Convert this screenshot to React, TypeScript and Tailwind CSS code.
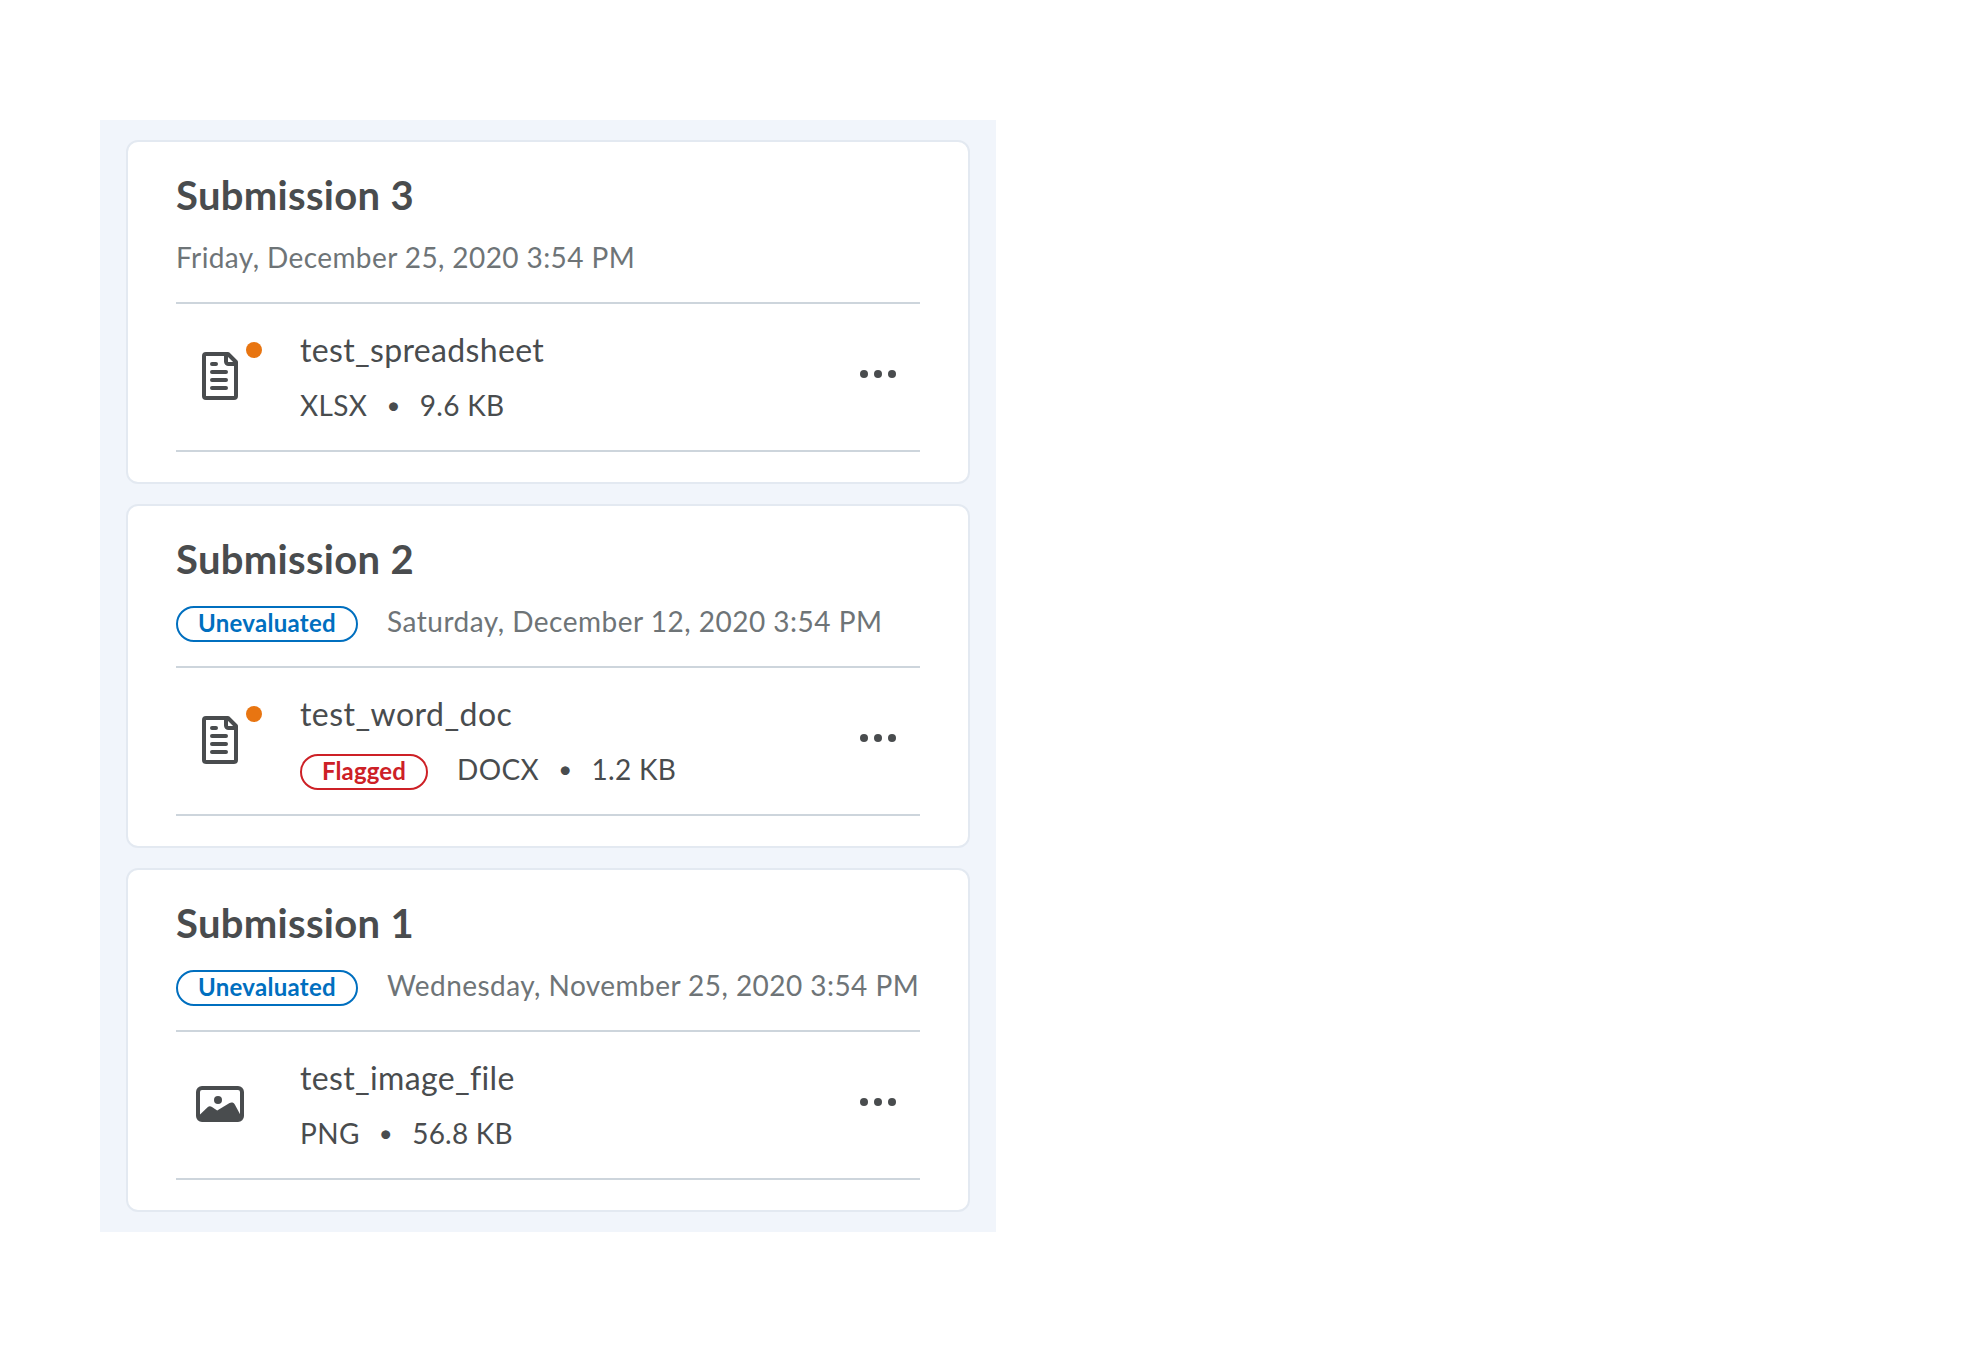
import type { ReactNode } from "react";

type Submission = {
  title: string;
  unevaluated: boolean;
  date: string;
  dateTracking: string;
  file: string;
  fileTracking: string;
  kind: "document" | "image";
  unread: boolean;
  flagged: boolean;
  ext: string;
  size: string;
  sizeTracking: string;
};

const submissions: Submission[] = [
  { title: "Submission 3", unevaluated: false, date: "Friday, December 25, 2020 3:54 PM", dateTracking: "tracking-[0.41px]", file: "test_spreadsheet", fileTracking: "tracking-[0.34px]", kind: "document", unread: true, flagged: false, ext: "XLSX", size: "9.6 KB", sizeTracking: "tracking-[0.3px]" },
  { title: "Submission 2", unevaluated: true, date: "Saturday, December 12, 2020 3:54 PM", dateTracking: "tracking-[0.5px]", file: "test_word_doc", fileTracking: "tracking-[0.46px]", kind: "document", unread: true, flagged: true, ext: "DOCX", size: "1.2 KB", sizeTracking: "tracking-[0.3px]" },
  { title: "Submission 1", unevaluated: true, date: "Wednesday, November 25, 2020 3:54 PM", dateTracking: "tracking-[0.45px]", file: "test_image_file", fileTracking: "tracking-[0.34px]", kind: "image", unread: false, flagged: false, ext: "PNG", size: "56.8 KB", sizeTracking: "tracking-[0.2px]" },
];

function DocumentIcon() {
  return (
    <svg className="size-12" viewBox="0 0 48 48" fill="none" stroke="currentColor" strokeWidth="4">
      <path d="M10 2H32L40 10V44a2 2 0 0 1-2 2H10a2 2 0 0 1-2-2V4a2 2 0 0 1 2-2Z" strokeLinejoin="round" />
      <path d="M30 2v7.500a2.500 2.500 0 0 0 2.500 2.500H40" />
      <path d="M16 12h4M16 20h14M16 28h14M16 36h14" strokeLinecap="round" />
    </svg>
  );
}

function ImageIcon() {
  return (
    <svg className="size-12" viewBox="0 0 48 48" fill="currentColor">
      <rect x="2" y="8" width="44" height="32" rx="4" fill="none" stroke="currentColor" strokeWidth="4" />
      <circle cx="22" cy="20" r="4" />
      <path d="M3 35.500 11.600 27.200a3.400 3.400 0 0 1 4.400-.2l5.200 3.600 12.400-7.600a3.600 3.600 0 0 1 5.200 1.400L45 36v4H3Z" />
    </svg>
  );
}

function Pill({ className, children }: { className: string; children: ReactNode }) {
  return (
    <span className={`mt-0.5 mr-[29px] h-9 shrink-0 rounded-full border-2 px-5 text-2xl/[29px] font-bold ${className}`}>
      {children}
    </span>
  );
}

function Card({ s }: { s: Submission }) {
  return (
    <article className="h-[344px] rounded-xl border-2 border-[#e3e9f1] bg-white px-12 pt-[29px]">
      <h3 className="text-[40px]/[48px] font-bold tracking-[0.3px]">{s.title}</h3>
      <div className="mt-[21px] flex h-[34px] text-[28px]/[34px] whitespace-nowrap text-[#6e7477]">
        {s.unevaluated && <Pill className="border-[#006fbf] tracking-[0.29px] text-[#006fbf]">Unevaluated</Pill>}
        <span className={s.dateTracking}>{s.date}</span>
      </div>
      <div className="mt-7 flex h-[150px] border-y-2 border-[#cdd5dc] pr-6 pl-5">
        <div className="relative mt-12 size-12">
          {s.kind === "document" ? <DocumentIcon /> : <ImageIcon />}
          {s.unread && <span className="absolute -top-2.5 left-[50px] size-4 rounded-full bg-[#e87511]" />}
        </div>
        <div className="ml-14 flex-1 pt-[26px]">
          <div className={`text-[32px]/[39px] ${s.fileTracking}`}>{s.file}</div>
          <div className="mt-[19px] flex h-[34px] text-[28px]/[34px] tracking-[0.4px]">
            {s.flagged && <Pill className="border-[#cd2026] tracking-[0.13px] text-[#cd2026]">Flagged</Pill>}
            <span>{s.ext}</span>
            <span className="mx-[19px] text-2xl/[34px]">•</span>
            <span className={s.sizeTracking}>{s.size}</span>
          </div>
        </div>
        <svg className="mt-[66px] h-2 w-9" viewBox="0 0 36 8" fill="currentColor">
          <circle cx="4" cy="4" r="4" />
          <circle cx="18" cy="4" r="4" />
          <circle cx="32" cy="4" r="4" />
        </svg>
      </div>
    </article>
  );
}

export default function App() {
  return (
    <main className="flex min-h-[1352px] items-start bg-white px-[100px] pt-[120px] font-['Lato',sans-serif] text-[#494c4e]">
      <section className="flex h-[1112px] w-[896px] flex-col gap-5 bg-[#f1f5fb] px-[26px] py-5">
        {submissions.map((s) => (
          <Card key={s.title} s={s} />
        ))}
      </section>
    </main>
  );
}
